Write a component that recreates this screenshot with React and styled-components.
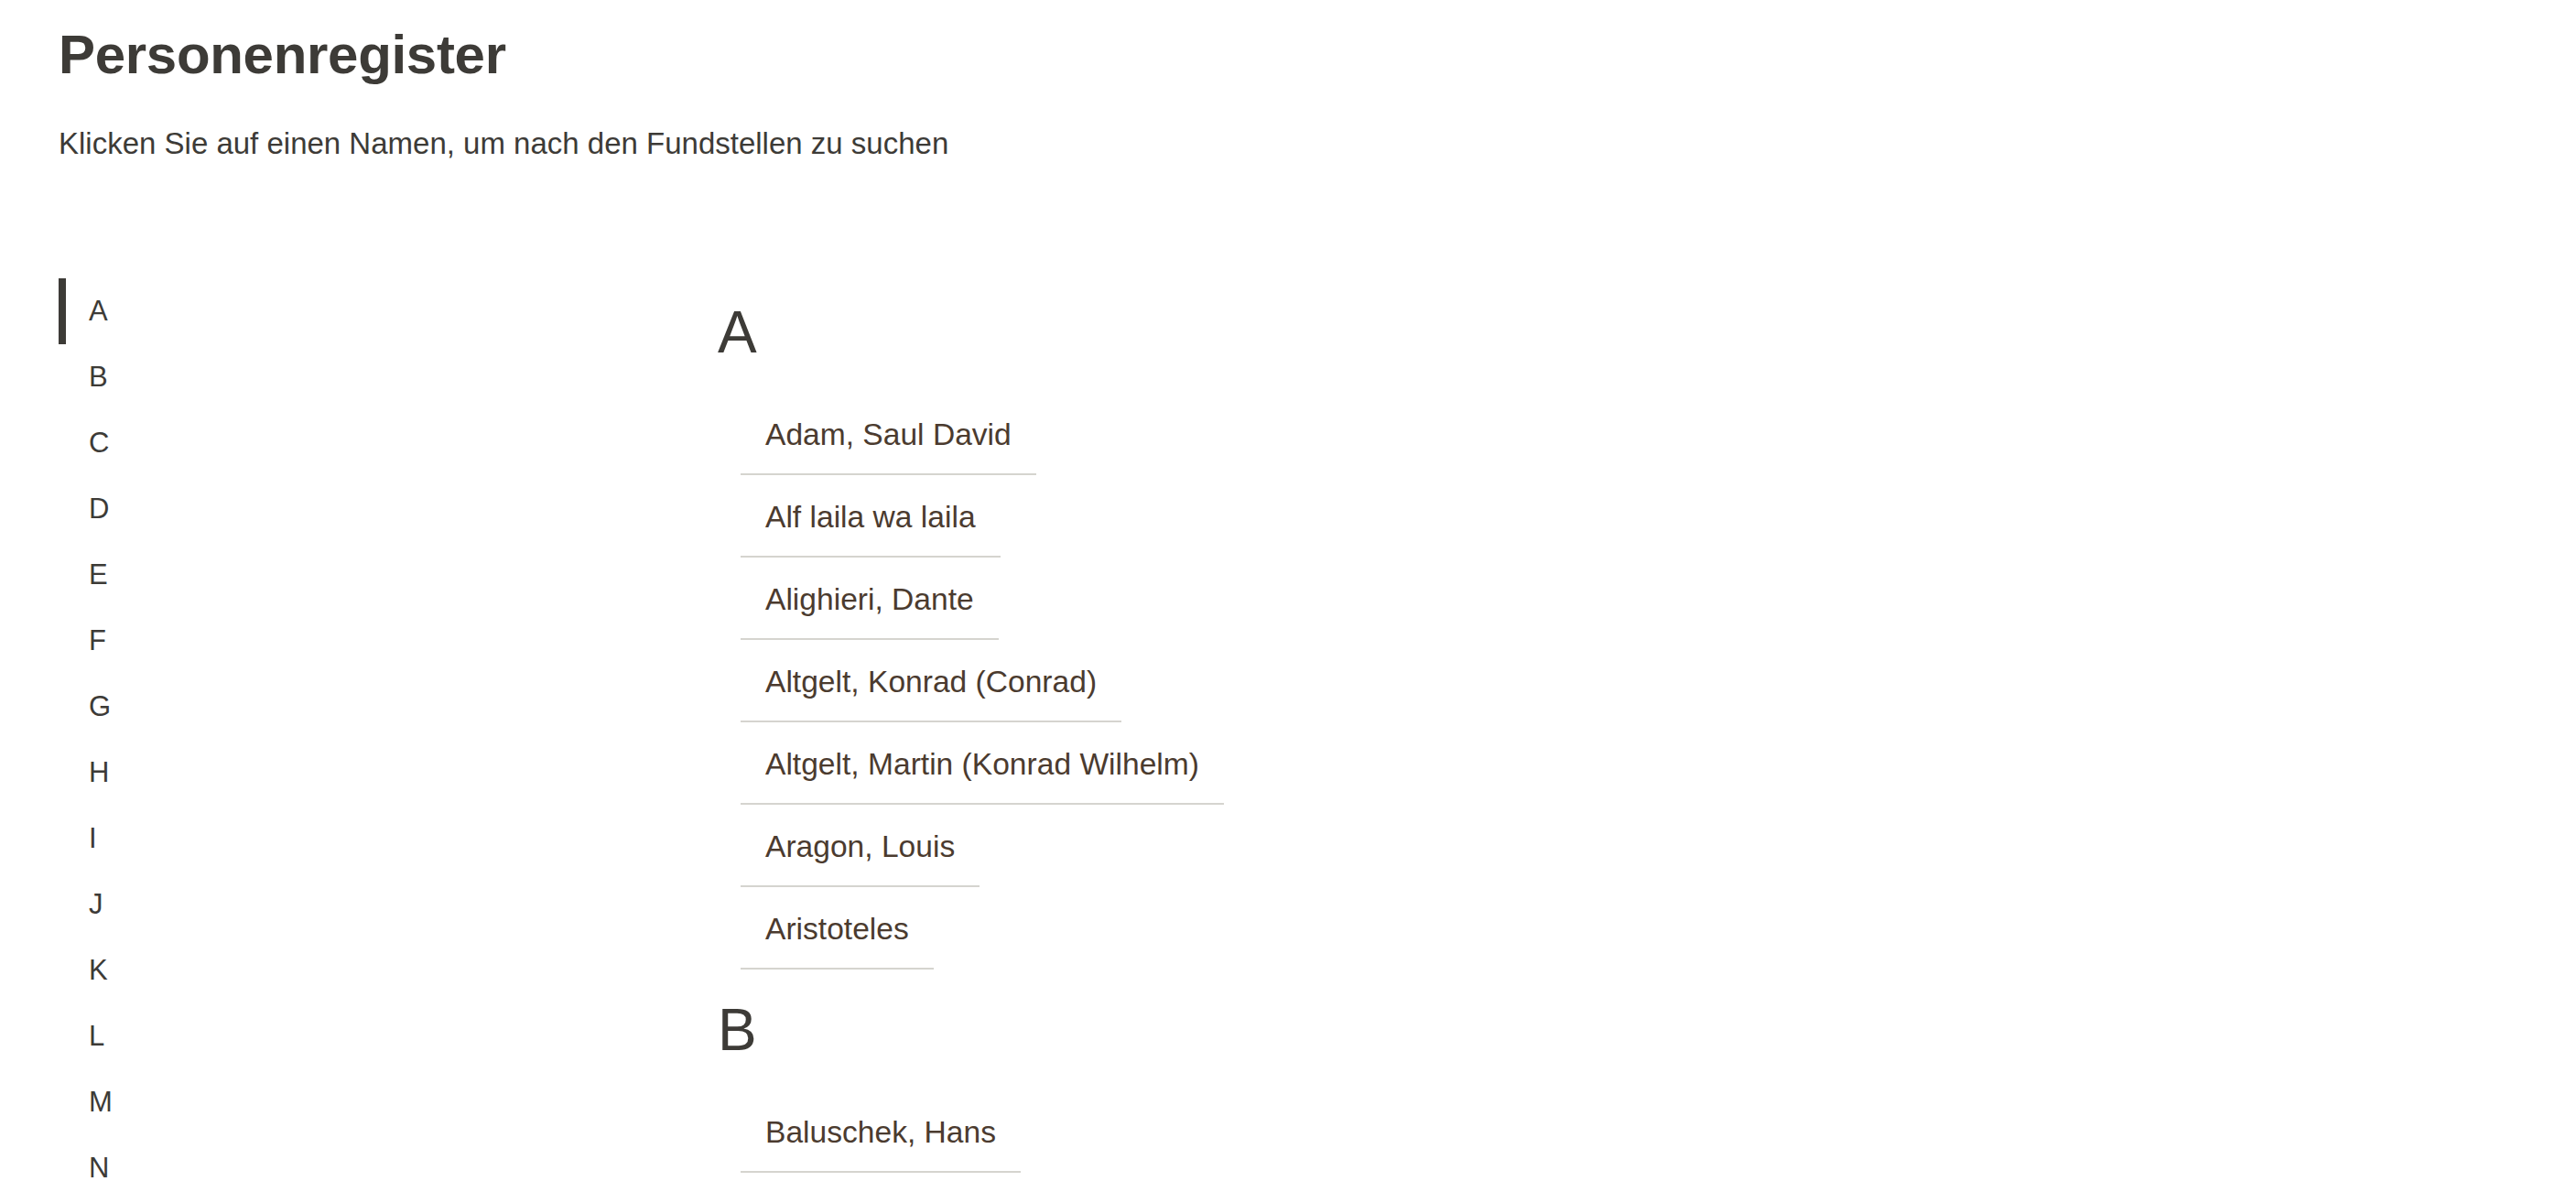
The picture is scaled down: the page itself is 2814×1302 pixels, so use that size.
import styled, { createGlobalStyle } from "styled-components";

const LETTERS = "ABCDEFGHIJKLMNOPQRSTUVWXYZ".split("");

const REGISTER = [
    {
        letter: "A",
        names: [
            "Adam, Saul David",
            "Alf laila wa laila",
            "Alighieri, Dante",
            "Altgelt, Konrad (Conrad)",
            "Altgelt, Martin (Konrad Wilhelm)",
            "Aragon, Louis",
            "Aristoteles",
        ],
    },
    {
        letter: "B",
        names: ["Baluschek, Hans"],
    },
];

function App() {
    return (
        <>
            <GlobalStyle/>
            <Page>
                <Title>Personenregister</Title>
                <Lead>Klicken Sie auf einen Namen, um nach den Fundstellen zu suchen</Lead>

                <Layout>
                    <LetterNav>
                        {LETTERS.map((letter) => (
                            <li key={letter}>
                                <LetterLink href={`#${letter}`} $active={letter === "A"}>
                                    {letter}
                                </LetterLink>
                            </li>
                        ))}
                    </LetterNav>

                    <Register>
                        {REGISTER.map((group) => (
                            <section key={group.letter} id={group.letter}>
                                <GroupHeading>{group.letter}</GroupHeading>
                                <NameList>
                                    {group.names.map((name) => (
                                        <li key={name}>
                                            <NameLink href="#">{name}</NameLink>
                                        </li>
                                    ))}
                                </NameList>
                            </section>
                        ))}
                    </Register>
                </Layout>
            </Page>
        </>
    );
}

const GlobalStyle = createGlobalStyle`
  html {
    scrollbar-width: none;
  }

  body {
    margin: 0;
    background: #fff;
    color: #3d3b37;
    font-family: "Liberation Sans", Arial, sans-serif;
  }
`;

const Page = styled.div`
  padding: 24px 64px 0;
`;

const Title = styled.h1`
  margin: 0;
  font-size: 60px;
  line-height: 72px;
  font-weight: 700;
  letter-spacing: -0.3px;
  color: #3d3b37;
`;

const Lead = styled.p`
  margin: 36px 0 0;
  font-size: 33px;
  line-height: 49px;
  color: #3d3b37;
`;

const Layout = styled.div`
  display: grid;
  grid-template-columns: 720px 1fr;
  margin-top: 116px;
`;

const LetterNav = styled.ul`
  margin: 7px 0 0;
  padding: 0;
  list-style: none;
`;

const LetterLink = styled.a`
  display: block;
  height: 72px;
  line-height: 72px;
  padding-left: 25px;
  border-left: 8px solid ${(props) => (props.$active ? "#3d3b37" : "transparent")};
  font-size: 31px;
  color: #3d3b37;
  text-decoration: none;
`;

const Register = styled.div`
  min-width: 0;
`;

const GroupHeading = styled.h2`
  margin: 28px 0;
  font-size: 64px;
  line-height: 76px;
  font-weight: 400;
  color: #3d3b37;
`;

const NameList = styled.ul`
  margin: 0 0 0 25px;
  padding: 0;
  list-style: none;

  li {
    display: flex;
  }
`;

const NameLink = styled.a`
  padding: 3px 27px 0;
  line-height: 85px;
  font-size: 33.6px;
  color: #4b3b2f;
  text-decoration: none;
  border-bottom: 2px solid #d5d4cf;

  &:hover {
    color: #2a2119;
  }
`;

export default App;
